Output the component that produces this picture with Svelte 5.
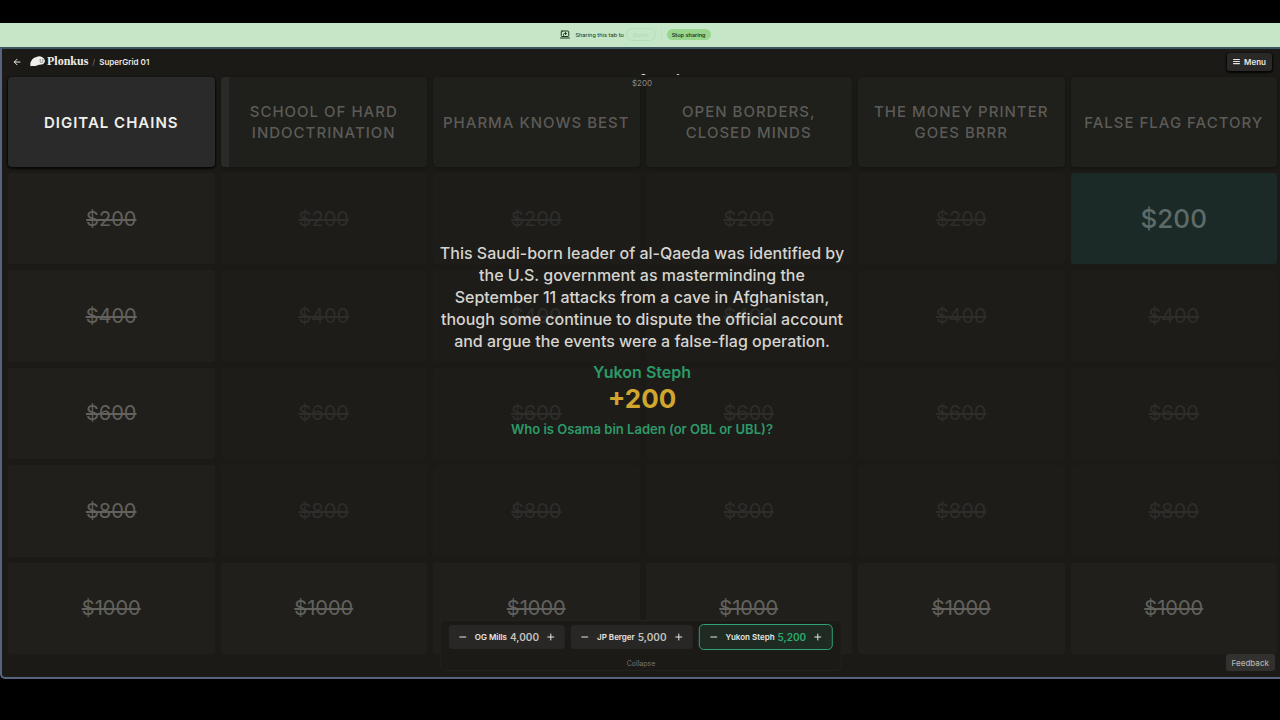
<script>
	const categories = [
		'Digital Chains',
		'School of Hard Indoctrination',
		'Pharma Knows Best',
		'Open Borders, Closed Minds',
		'The Money Printer Goes Brrr',
		'False Flag Factory'
	];
	const values = [200, 400, 600, 800, 1000];

	let players = $state([
		{ name: 'OG Mills', score: 4000 },
		{ name: 'JP Berger', score: 5000 },
		{ name: 'Yukon Steph', score: 5200 }
	]);
	let activePlayer = 2;
	let activeCategory = 5;
	let activeValue = 200;
	let collapsed = $state(false);

	function isActive(col, value) {
		return col === activeCategory && value === activeValue;
	}

	function isLit(col, value) {
		return col === 0 || value === 1000;
	}

	function changeScore(player, amount) {
		player.score += amount;
	}
</script>

<div class="page">
	<div class="share">
		<svg class="share-icon" viewBox="0 0 20 18" aria-hidden="true">
			<rect x="2.5" y="2" width="15" height="11" rx="1.5" />
			<path d="M0.5 16h19" />
			<path d="M7 10.500V9q0-2 2-2h3M10.500 4.800L13 7l-2.500 2.200" />
		</svg>
		<span>Sharing this tab to</span>
		<span class="share-target">Zoom</span>
		<span class="share-line"></span>
		<button class="stop">Stop sharing</button>
	</div>

	<div class="app">
		<header>
			<button class="back" aria-label="Back">
				<svg viewBox="0 0 16 16"><path d="M14 8H2.500M8 2.500L2.500 8L8 13.500" /></svg>
			</button>
			<a class="logo" href="#home">
				<svg viewBox="0 0 28 20" aria-hidden="true">
					<path class="shape" d="M1 19C-1 12 4 3 12 1.500C16 0 20 0 23 2C27 4 28.500 8 27.500 11C26.500 15 22 16 18 16C14 16 12 18.500 8 18.500C5 18.500 4 17.500 1 19Z" />
					<circle cx="19" cy="7" r="1" />
					<circle cx="24" cy="7" r="1" />
					<path class="smile" d="M19 11q2.500 1.500 5 0" />
				</svg>
				<span>Plonkus</span>
			</a>
			<span class="slash">/</span>
			<span class="title">SuperGrid 01</span>
			<button class="menu">
				<svg viewBox="0 0 12 12" aria-hidden="true"><path d="M1 2.500h10M1 6h10M1 9.500h10" /></svg>
				Menu
			</button>
		</header>

		<main>
			<div class="board">
				{#each categories as category, col}
					<h2 class="category" class:lit={col === 0} class:edge={col === 1}>{category}</h2>
				{/each}
				{#each values as value}
					{#each categories as category, col}
						<button
							class="cell"
							class:lit={isLit(col, value)}
							class:active={isActive(col, value)}
							aria-label="{category} for ${value}"
						>
							${value}
						</button>
					{/each}
				{/each}
			</div>

			<section class="clue">
				<div class="clue-category"><span>{categories[activeCategory]}</span></div>
				<div class="clue-value">${activeValue}</div>
				<div class="clue-body">
					<p class="question">
						This Saudi-born leader of al-Qaeda was identified by the U.S. government as
						masterminding the September 11 attacks from a cave in Afghanistan, though some
						continue to dispute the official account and argue the events were a false-flag
						operation.
					</p>
					<div class="winner">{players[activePlayer].name}</div>
					<div class="points">+{activeValue}</div>
					<p class="answer">Who is Osama bin Laden (or OBL or UBL)?</p>
				</div>
			</section>
		</main>

		<div class="scores">
			{#if !collapsed}
				<div class="players">
					{#each players as player, i}
						<div class="player" class:current={i === activePlayer}>
							<button aria-label="Subtract from {player.name}" onclick={() => changeScore(player, -200)}>
								<svg viewBox="0 0 8 8"><path d="M1 4h6" /></svg>
							</button>
							<span class="name">{player.name}</span>
							<span class="score">{player.score.toLocaleString('en-US')}</span>
							<button aria-label="Add to {player.name}" onclick={() => changeScore(player, 200)}>
								<svg viewBox="0 0 8 8"><path d="M1 4h6M4 1v6" /></svg>
							</button>
						</div>
					{/each}
				</div>
			{/if}
			<button class="collapse" onclick={() => (collapsed = !collapsed)}>
				{collapsed ? 'Expand' : 'Collapse'}
			</button>
		</div>

		<button class="feedback">Feedback</button>
	</div>
</div>

<style>
	:global(body) {
		margin: 0;
		background: #000;
	}

	.page {
		display: flex;
		flex-direction: column;
		box-sizing: border-box;
		min-height: 100vh;
		padding: 23px 0 41px;
		font-family: Inter, "Liberation Sans", sans-serif;
		color: #e8e6e1;
	}

	button {
		margin: 0;
		padding: 0;
		border: 0;
		background: none;
		color: inherit;
		font: inherit;
		cursor: pointer;
	}

	svg {
		display: block;
		fill: none;
		stroke: currentColor;
		stroke-linecap: round;
		stroke-linejoin: round;
	}

	/* browser sharing bar */
	.share {
		display: flex;
		align-items: center;
		justify-content: center;
		box-sizing: border-box;
		height: 24px;
		padding: 0 9px 2px 0;
		background: #c5e7c8;
		color: #1d3a20;
		font-family: Roboto, sans-serif;
		font-size: 6px;
	}

	.share-icon {
		width: 10px;
		height: 9px;
		margin-right: 5px;
		stroke-width: 2;
	}

	.share-target {
		margin-left: 2px;
		padding: 2px 6px;
		border: 1px solid #b3dfb6;
		border-radius: 8px;
		color: #b0d8b3;
	}

	.share-line {
		width: 1px;
		height: 12px;
		margin: 0 5px;
		background: #bce1bf;
	}

	.stop {
		padding: 2px 5px;
		border-radius: 6px;
		background: #98d68d;
		font-weight: 500;
	}

	.app {
		position: relative;
		display: flex;
		flex: 1;
		flex-direction: column;
		border: 2px solid #566480;
		border-top-color: #3b5560;
		border-right: 0;
		border-radius: 0 0 0 5px;
		background: #1b1a17;
	}

	header {
		display: flex;
		align-items: center;
		height: 25px;
		padding: 0 8px 0 11px;
	}

	.back svg {
		width: 8px;
		height: 8px;
		stroke-width: 2;
	}

	.logo {
		display: flex;
		align-items: center;
		gap: 2px;
		margin-left: 9px;
		color: #f0eee9;
		font-family: "Liberation Serif", serif;
		font-size: 12px;
		font-weight: 700;
		text-decoration: none;
	}

	.logo svg {
		width: 15px;
		height: 11px;
	}

	.logo .shape {
		fill: #f0eee9;
		stroke: none;
	}

	.logo circle {
		fill: #1b1a17;
		stroke: none;
	}

	.logo .smile {
		stroke: #1b1a17;
	}

	.slash {
		margin: 0 4px;
		color: #77746e;
		font-size: 8px;
	}

	.title {
		font-size: 8px;
		font-weight: 600;
	}

	.menu {
		display: flex;
		align-items: center;
		gap: 4px;
		height: 18px;
		margin-left: auto;
		padding: 0 6px;
		border-radius: 3px;
		background: #2a2928;
		box-shadow: 0 1px 2px 1px #060605;
		font-size: 8px;
		font-weight: 600;
	}

	.menu svg {
		width: 7px;
		height: 7px;
		stroke-width: 2;
	}

	main {
		position: relative;
		display: flex;
		flex: 1;
		padding: 3px 3px 23px 6px;
	}

	.board {
		display: grid;
		flex: 1;
		grid-template-columns: repeat(6, minmax(0, 1fr));
		grid-template-rows: 90px repeat(5, minmax(56px, 1fr));
		gap: 6px;
	}

	.category {
		display: flex;
		align-items: center;
		justify-content: center;
		margin: 0;
		padding: 0 8px;
		border-radius: 4px;
		background: #1f1f1b;
		box-shadow: 0 1px 2px 1px #171613;
		color: #5c5b57;
		font-size: 15px;
		font-weight: 500;
		line-height: 21px;
		letter-spacing: 1px;
		text-align: center;
		text-transform: uppercase;
	}

	.category.lit {
		background: #2b2a2a;
		box-shadow: 0 1px 2px 1px #080807;
		color: #f0eee9;
		font-weight: 600;
	}

	.category.edge {
		background: linear-gradient(to right, #2a2a28 8px, #1f1f1b 8px);
	}

	.cell {
		border-radius: 3px;
		background: #1d1c19;
		color: #2e2d2a;
		font-size: 20px;
		text-decoration: line-through;
	}

	.cell.lit {
		background: #201f1c;
		color: #62615d;
	}

	.cell.active {
		background: #1b2a27;
		color: #5f6b68;
		font-size: 26px;
		font-weight: 500;
		text-decoration: none;
	}

	/* open clue, drawn over the board */
	.clue {
		position: absolute;
		inset: 0;
		display: flex;
		flex-direction: column;
		align-items: center;
		padding-left: 2px;
		text-align: center;
		pointer-events: none;
	}

	.clue-category {
		display: flex;
		align-items: flex-end;
		height: 2px;
		overflow: hidden;
		font-size: 9px;
		font-weight: 600;
		line-height: 12px;
	}

	.clue-value {
		margin-top: 2px;
		color: #8b8984;
		font-size: 8px;
		line-height: 10px;
	}

	.clue-body {
		display: flex;
		flex: 1;
		flex-direction: column;
		align-items: center;
		justify-content: center;
		padding-bottom: 84px;
	}

	.question {
		max-width: 410px;
		margin: 0 0 9px;
		color: #d6d4cf;
		font-size: 16px;
		font-weight: 500;
		line-height: 22px;
	}

	.winner {
		color: #2c9a68;
		font-size: 16px;
		font-weight: 600;
		line-height: 22px;
	}

	.points {
		color: #d0a62e;
		font-size: 26px;
		font-weight: 700;
		line-height: 32px;
	}

	.answer {
		margin: 4px 0 0;
		color: #2c9a68;
		font-size: 13px;
		font-weight: 600;
		line-height: 20px;
	}

	.scores {
		position: absolute;
		bottom: 6px;
		left: 50%;
		display: flex;
		flex-direction: column;
		align-items: center;
		gap: 9px;
		padding: 3px 8px 2px;
		border: 1px solid #23221f;
		border-radius: 6px;
		background: #1b1a17;
		transform: translateX(-50%);
	}

	.players {
		display: flex;
		align-items: center;
		gap: 6px;
	}

	.player {
		display: flex;
		align-items: center;
		height: 24px;
		padding: 0 10px;
		border-radius: 4px;
		background: #282725;
		white-space: nowrap;
	}

	.player svg {
		width: 8px;
		height: 8px;
	}

	.name {
		margin: 0 3px 0 8px;
		font-size: 8px;
		font-weight: 600;
	}

	.score {
		margin-right: 8px;
		color: #c4c2bd;
		font-size: 10px;
		font-weight: 600;
	}

	.player.current {
		border: 1px solid #2fa373;
		border-radius: 5px;
		background: #1e2a22;
	}

	.current .score {
		color: #2bab6d;
	}

	.collapse {
		color: #77756f;
		font-size: 7px;
		line-height: 9px;
	}

	.feedback {
		position: absolute;
		right: 5px;
		bottom: 6px;
		height: 17px;
		padding: 0 6px;
		border-radius: 3px;
		background: #32312f;
		color: #b5b3ae;
		font-size: 8px;
		font-weight: 500;
	}
</style>
